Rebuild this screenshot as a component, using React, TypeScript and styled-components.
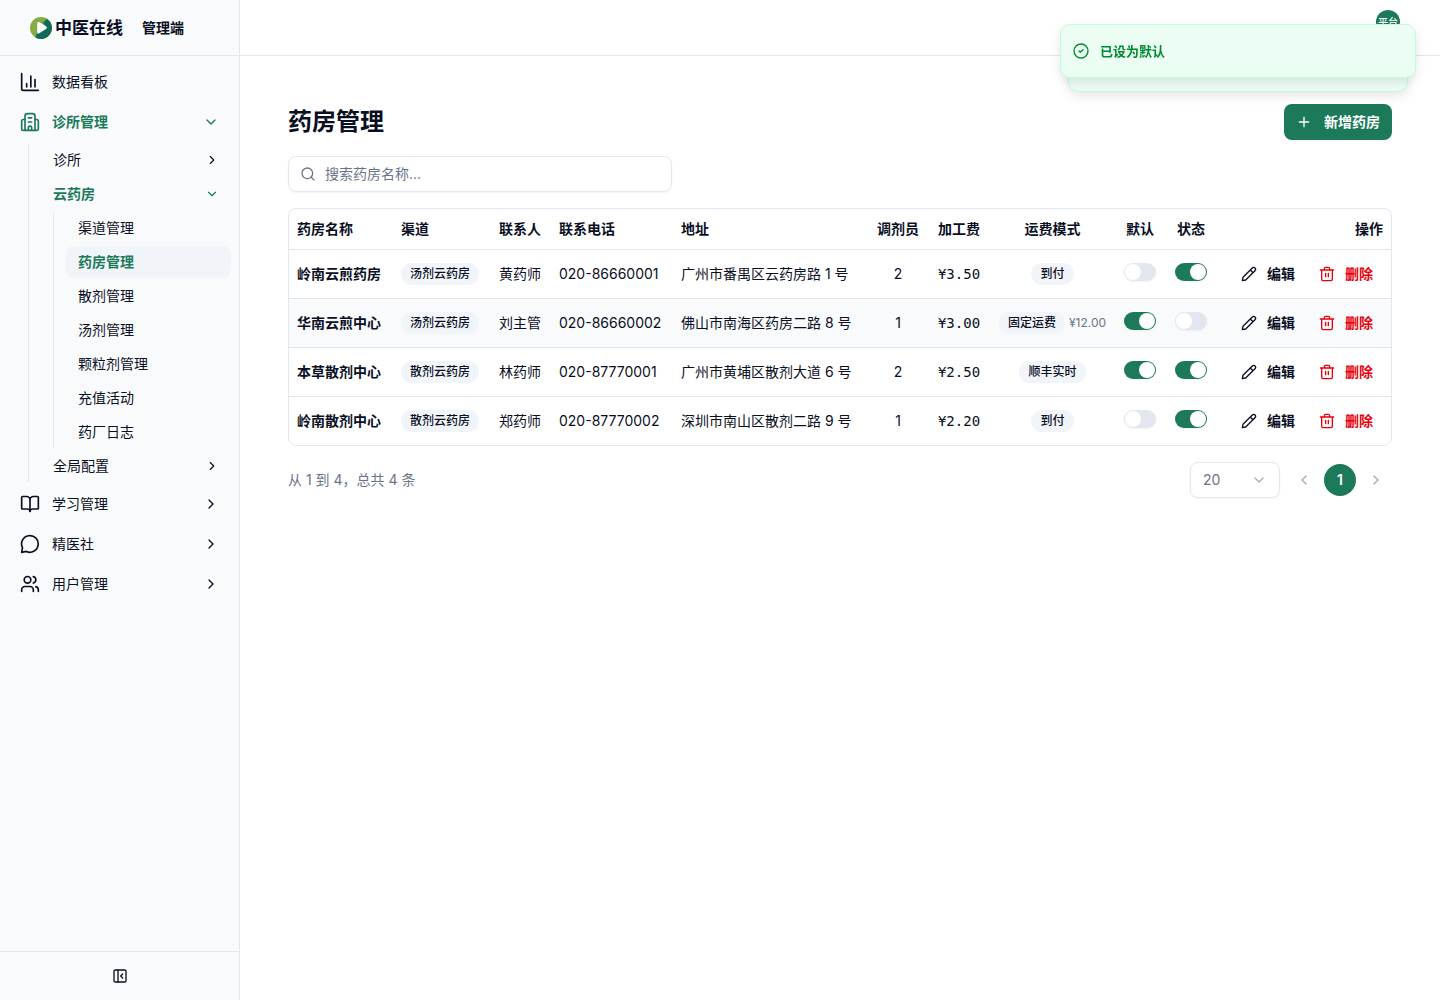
import React, { useState } from 'react';
import styled, { createGlobalStyle, css } from 'styled-components';
import {
  BookOpen,
  ChevronDown,
  ChevronLeft,
  ChevronRight,
  Plus,
  Search,
  Users,
} from 'lucide-react';

const color = {
  text: '#0a0f24',
  muted: '#6b7488',
  border: '#e2e6ef',
  panel: '#f8fafc',
  soft: '#f1f4f9',
  primary: '#1c7a5a',
  danger: '#e7000b',
};

const GlobalStyle = createGlobalStyle`
  *, *::before, *::after { box-sizing: border-box; }
  body {
    margin: 0;
    background: #fff;
    color: ${color.text};
    font: 400 14px/20px Inter, "Noto Sans CJK SC", sans-serif;
  }
  button, input, select { font: inherit; color: inherit; }
  button { cursor: pointer; border: 0; padding: 0; background: none; }
  ul { list-style: none; margin: 0; padding: 0; }
  svg { flex: none; display: block; }
`;

const Shell = styled.div`
  display: grid;
  grid-template-columns: 240px minmax(0, 1fr);
  min-height: 100vh;
`;

const Sidebar = styled.aside`
  position: sticky;
  top: 0;
  height: 100vh;
  display: flex;
  flex-direction: column;
  background: ${color.panel};
  border-right: 1px solid ${color.border};
`;

const Brand = styled.div`
  height: 56px;
  display: flex;
  align-items: center;
  gap: 19px;
  padding: 0 30px;
  border-bottom: 1px solid ${color.border};
  font-weight: 600;
`;

const Logo = styled.div`
  display: flex;
  align-items: center;
  gap: 3px;
  font-size: 17px;
  font-weight: 600;
`;

const Nav = styled.nav`
  flex: 1;
  min-height: 0;
  overflow-y: auto;
  padding: 8px;
`;

const Level = styled.ul<{ $depth: number }>`
  display: flex;
  flex-direction: column;
  gap: ${(p) => (p.$depth === 0 ? 4 : 2)}px;
  ${(p) =>
    p.$depth > 0 &&
    css`
      margin-top: ${p.$depth === 1 ? 4 : 2}px;
      margin-left: ${p.$depth === 1 ? 20 : 12}px;
      padding-left: 12px;
      border-left: 1px solid ${color.border};
    `}
`;

const navItem = css<{ $depth: number; $open?: boolean }>`
  width: 100%;
  height: ${(p) => (p.$depth === 0 ? 36 : 32)}px;
  display: flex;
  align-items: center;
  gap: 12px;
  padding: 0 12px;
  border-radius: 8px;
  text-align: left;
  text-decoration: none;
  color: ${(p) => (p.$open ? color.primary : color.text)};
  font-weight: ${(p) => (p.$open ? 600 : 400)};
`;

const NavButton = styled.button<{ $depth: number; $open?: boolean }>`
  ${navItem}
`;

const NavLink = styled.a<{ $depth: number; $open?: boolean }>`
  ${navItem}
  &[aria-current='page'] {
    background: ${color.soft};
  }
`;

const NavText = styled.span`
  flex: 1;
`;

const SidebarFoot = styled.div`
  height: 49px;
  display: flex;
  align-items: center;
  justify-content: center;
  border-top: 1px solid ${color.border};
`;

const Topbar = styled.header`
  height: 56px;
  display: flex;
  justify-content: flex-end;
  padding: 10px 40px;
  border-bottom: 1px solid ${color.border};
`;

const Avatar = styled.button`
  width: 24px;
  height: 24px;
  border-radius: 50%;
  background: ${color.primary};
  color: #fff;
  font-size: 10px;
  font-weight: 500;
  line-height: 24px;
`;

const Main = styled.main`
  display: flex;
  flex-direction: column;
  gap: 16px;
  padding: 48px;
`;

const PageHead = styled.div`
  display: flex;
  align-items: center;
  justify-content: space-between;
`;

const Title = styled.h1`
  margin: 0;
  font-size: 24px;
  line-height: 32px;
  font-weight: 700;
`;

const PrimaryButton = styled.button`
  height: 36px;
  display: flex;
  align-items: center;
  gap: 12px;
  padding: 0 12px;
  border-radius: 8px;
  background: ${color.primary};
  color: #fff;
  font-weight: 600;
`;

const field = css`
  height: 36px;
  display: flex;
  align-items: center;
  border: 1px solid ${color.border};
  border-radius: 8px;
  box-shadow: 0 1px 2px rgba(0, 0, 0, 0.05);
  color: ${color.muted};
`;

const SearchBox = styled.label`
  ${field}
  width: 100%;
  max-width: 384px;
  gap: 9px;
  padding: 0 11px;

  input {
    flex: 1;
    min-width: 0;
    padding: 0;
    border: 0;
    outline: 0;
    background: none;
    color: ${color.text};
  }
  input::placeholder {
    color: ${color.muted};
    opacity: 1;
  }
`;

const TableFrame = styled.div`
  overflow-x: auto;
  border: 1px solid ${color.border};
  border-radius: 8px;
`;

const Table = styled.table`
  width: 100%;
  min-width: 1080px;
  table-layout: fixed;
  border-collapse: separate;
  border-spacing: 0;

  tbody tr:last-child td {
    height: 48px;
    border-bottom: 0;
  }
  tbody tr[aria-selected='true'] {
    background: ${color.panel};
  }
`;

type Align = 'left' | 'center' | 'right';

const Th = styled.th<{ $align?: Align }>`
  height: 41px;
  padding: 0 8px;
  border-bottom: 1px solid ${color.border};
  text-align: ${(p) => p.$align ?? 'left'};
  font-weight: 600;
  white-space: nowrap;
`;

const Td = styled.td<{ $align?: Align; $strong?: boolean }>`
  height: 49px;
  padding: 0 8px;
  border-bottom: 1px solid ${color.border};
  text-align: ${(p) => p.$align ?? 'left'};
  font-weight: ${(p) => (p.$strong ? 600 : 400)};
  white-space: nowrap;
`;

const Fee = styled.span`
  font-family: 'DejaVu Sans Mono', monospace;
`;

const Shipping = styled.div`
  display: flex;
  align-items: center;
  justify-content: center;
  gap: 4px;
  color: ${color.muted};
  font-size: 12px;
`;

const Badge = styled.span`
  display: inline-block;
  padding: 1px 9px;
  border-radius: 11px;
  background: ${color.soft};
  color: ${color.text};
  font-size: 12px;
  font-weight: 500;
`;

const Switch = styled.input`
  appearance: none;
  width: 32px;
  height: 18px;
  margin: 0;
  padding: 1px;
  border-radius: 9px;
  background: ${color.border};
  box-shadow: 0 1px 2px rgba(0, 0, 0, 0.05);
  cursor: pointer;

  &::before {
    content: '';
    display: block;
    width: 16px;
    height: 16px;
    border-radius: 50%;
    background: #fff;
  }
  &:checked {
    background: ${color.primary};
  }
  &:checked::before {
    margin-left: 14px;
  }
`;

const Actions = styled.div`
  display: flex;
  justify-content: flex-end;
  gap: 4px;
`;

const ActionButton = styled.button<{ $danger?: boolean }>`
  height: 32px;
  display: flex;
  align-items: center;
  gap: 10px;
  padding: 0 10px;
  border-radius: 8px;
  font-weight: 600;
  color: ${(p) => (p.$danger ? color.danger : color.text)};
`;

const Footer = styled.div`
  display: flex;
  align-items: center;
  justify-content: space-between;
  color: ${color.muted};
`;

const Pager = styled.div`
  display: flex;
  align-items: center;
  gap: 8px;
`;

const SizeSelect = styled.label`
  ${field}
  width: 90px;
  padding-right: 12px;

  select {
    flex: 1;
    height: 34px;
    margin-right: -16px;
    padding: 0 12px;
    border: 0;
    outline: 0;
    appearance: none;
    background: none;
  }
  svg {
    opacity: 0.6;
    pointer-events: none;
  }
`;

const Pages = styled.div`
  display: flex;
  gap: 4px;
`;

const PageButton = styled.button`
  width: 32px;
  height: 32px;
  display: flex;
  align-items: center;
  justify-content: center;
  border-radius: 50%;
  font-weight: 600;

  &:disabled {
    opacity: 0.6;
    cursor: default;
  }
  &[aria-current='page'] {
    background: ${color.primary};
    color: #fff;
  }
`;

const toastSurface = css`
  border: 1px solid #bffcd9;
  border-radius: 10px;
  background: #ecfdf3;
  box-shadow: 0 4px 12px rgba(0, 0, 0, 0.1);
`;

const ToastStack = styled.div`
  position: fixed;
  top: 24px;
  right: 24px;
  width: 356px;
`;

const Toast = styled.div`
  ${toastSurface}
  position: relative;
  height: 54px;
  display: flex;
  align-items: center;
  gap: 11px;
  padding: 0 12px;
  color: #008a2e;
  font-size: 13px;
  font-weight: 600;
`;

const ToastBehind = styled.div`
  ${toastSurface}
  position: absolute;
  inset: 16px 8px -14px;
`;

const LogoMark = () => (
  <svg width="22" height="22" viewBox="0 0 22 22" aria-hidden="true">
    <circle cx="11" cy="11" r="11" fill="#86ad45" />
    <path d="M17 1.8A11 11 0 0 1 5.6 20.6L6.6 16.5 16 11 13 5.5Z" fill="#126b58" />
    <path d="M7.2 6.2C7.2 5 8.3 4.7 9.3 5.2L16 9.3C17.2 10 17.2 11.4 16 12.1L8.8 16.6C7.8 17.1 7.2 16.6 7.2 15.6Z" fill="#fff" />
  </svg>
);

type StrokeProps = { size?: number; children: React.ReactNode };

const Stroke = ({ size = 20, children }: StrokeProps) => (
  <svg
    width={size}
    height={size}
    viewBox="0 0 24 24"
    fill="none"
    stroke="currentColor"
    strokeWidth="2"
    strokeLinecap="round"
    strokeLinejoin="round"
    aria-hidden="true"
  >
    {children}
  </svg>
);

const ChartIcon = () => (
  <Stroke>
    <path d="M2 2v18a2 2 0 0 0 2 2h18M8 18v-4M13 18V5M18 18V9" />
  </Stroke>
);

const BuildingIcon = () => (
  <Stroke>
    <path d="M10 22v-3a2 2 0 0 1 4 0v3M10 7h4M10 12h4" />
    <path d="M6 9H4a2 2 0 0 0-2 2v9a2 2 0 0 0 2 2h16a2 2 0 0 0 2-2v-9a2 2 0 0 0-2-2h-2" />
    <path d="M6 22V5a3 3 0 0 1 3-3h6a3 3 0 0 1 3 3v17" />
  </Stroke>
);

const BubbleIcon = () => (
  <Stroke>
    <path d="M3 16.5A10 10 0 1 1 7.5 20.9L2 22Z" />
  </Stroke>
);

const PencilIcon = () => (
  <Stroke size={16}>
    <path d="M3 17 17 3a2.8 2.8 0 0 1 4 4L7 21l-5 1ZM14 6l4 4" />
  </Stroke>
);

const TrashIcon = () => (
  <Stroke size={16}>
    <path d="M2 6h20M4 6v14a2 2 0 0 0 2 2h12a2 2 0 0 0 2-2V6M8 6V4a2 2 0 0 1 2-2h4a2 2 0 0 1 2 2v2M10 11v5M14 11v5" />
  </Stroke>
);

const CollapseIcon = () => (
  <Stroke size={16}>
    <rect x="3" y="3" width="18" height="18" rx="2" />
    <path d="M9 3v18M16 9l-3 3 3 3" />
  </Stroke>
);

const ToastIcon = () => (
  <Stroke size={16}>
    <circle cx="12" cy="12" r="10.5" />
    <path d="m9 12 2 2 4-4" />
  </Stroke>
);

type Item = { label: string; icon?: React.ReactNode; children?: Item[]; open?: boolean; current?: boolean; leaf?: boolean };

const menu: Item[] = [
  { label: '数据看板', icon: <ChartIcon />, leaf: true },
  {
    label: '诊所管理',
    icon: <BuildingIcon />,
    open: true,
    children: [
      { label: '诊所' },
      {
        label: '云药房',
        open: true,
        children: [
          { label: '渠道管理', leaf: true },
          { label: '药房管理', leaf: true, current: true },
          { label: '散剂管理', leaf: true },
          { label: '汤剂管理', leaf: true },
          { label: '颗粒剂管理', leaf: true },
          { label: '充值活动', leaf: true },
          { label: '药厂日志', leaf: true },
        ],
      },
      { label: '全局配置' },
    ],
  },
  { label: '学习管理', icon: <BookOpen size={20} /> },
  { label: '精医社', icon: <BubbleIcon /> },
  { label: '用户管理', icon: <Users size={20} /> },
];

const MenuItem = ({ item, depth }: { item: Item; depth: number }) => {
  const [open, setOpen] = useState(!!item.open);
  const chevron = depth === 0 ? 16 : 14;
  if (item.leaf) {
    return (
      <li>
        <NavLink href="#" $depth={depth} $open={item.current} aria-current={item.current ? 'page' : undefined}>
          {item.icon}
          <NavText>{item.label}</NavText>
        </NavLink>
      </li>
    );
  }
  return (
    <li>
      <NavButton type="button" $depth={depth} $open={open} aria-expanded={open} onClick={() => setOpen(!open)}>
        {item.icon}
        <NavText>{item.label}</NavText>
        {open ? <ChevronDown size={chevron} /> : <ChevronRight size={chevron} />}
      </NavButton>
      {open && item.children && <Menu items={item.children} depth={depth + 1} />}
    </li>
  );
};

const Menu = ({ items, depth }: { items: Item[]; depth: number }) => (
  <Level $depth={depth}>
    {items.map((item) => (
      <MenuItem key={item.label} item={item} depth={depth} />
    ))}
  </Level>
);

const columns: { label: string; width: number; align?: Align }[] = [
  { label: '药房名称', width: 104 },
  { label: '渠道', width: 98 },
  { label: '联系人', width: 60 },
  { label: '联系电话', width: 122 },
  { label: '地址', width: 196 },
  { label: '调剂员', width: 58, align: 'center' },
  { label: '加工费', width: 64, align: 'center' },
  { label: '运费模式', width: 123, align: 'center' },
  { label: '默认', width: 52, align: 'center' },
  { label: '状态', width: 50, align: 'center' },
  { label: '操作', width: 175, align: 'right' },
];

const pharmacies = [
  { name: '岭南云煎药房', channel: '汤剂云药房', contact: '黄药师', phone: '020-86660001', address: '广州市番禺区云药房路 1 号', staff: 2, fee: '¥3.50', shipping: '到付', isDefault: false, enabled: true },
  { name: '华南云煎中心', channel: '汤剂云药房', contact: '刘主管', phone: '020-86660002', address: '佛山市南海区药房二路 8 号', staff: 1, fee: '¥3.00', shipping: '固定运费', price: '¥12.00', isDefault: true, enabled: false, active: true },
  { name: '本草散剂中心', channel: '散剂云药房', contact: '林药师', phone: '020-87770001', address: '广州市黄埔区散剂大道 6 号', staff: 2, fee: '¥2.50', shipping: '顺丰实时', isDefault: true, enabled: true },
  { name: '岭南散剂中心', channel: '散剂云药房', contact: '郑药师', phone: '020-87770002', address: '深圳市南山区散剂二路 9 号', staff: 1, fee: '¥2.20', shipping: '到付', isDefault: false, enabled: true },
];

export default function App() {
  return (
    <>
      <GlobalStyle />
      <Shell>
        <Sidebar>
          <Brand>
            <Logo>
              <LogoMark />
              <span>中医在线</span>
            </Logo>
            <span>管理端</span>
          </Brand>
          <Nav>
            <Menu items={menu} depth={0} />
          </Nav>
          <SidebarFoot>
            <button type="button" aria-label="收起侧栏">
              <CollapseIcon />
            </button>
          </SidebarFoot>
        </Sidebar>

        <div>
          <Topbar>
            <Avatar type="button">平台</Avatar>
          </Topbar>
          <Main>
            <PageHead>
              <Title>药房管理</Title>
              <PrimaryButton type="button">
                <Plus size={16} />
                新增药房
              </PrimaryButton>
            </PageHead>

            <SearchBox>
              <Search size={16} />
              <input type="text" placeholder="搜索药房名称..." aria-label="搜索药房名称" />
            </SearchBox>

            <TableFrame>
              <Table>
                <colgroup>
                  {columns.map((c) => (
                    <col key={c.label} width={c.width} />
                  ))}
                </colgroup>
                <thead>
                  <tr>
                    {columns.map((c) => (
                      <Th key={c.label} $align={c.align}>
                        {c.label}
                      </Th>
                    ))}
                  </tr>
                </thead>
                <tbody>
                  {pharmacies.map((p) => (
                    <tr key={p.name} aria-selected={!!p.active}>
                      <Td $strong>{p.name}</Td>
                      <Td>
                        <Badge>{p.channel}</Badge>
                      </Td>
                      <Td>{p.contact}</Td>
                      <Td>{p.phone}</Td>
                      <Td>{p.address}</Td>
                      <Td $align="center">{p.staff}</Td>
                      <Td $align="center">
                        <Fee>{p.fee}</Fee>
                      </Td>
                      <Td $align="center">
                        <Shipping>
                          <Badge>{p.shipping}</Badge>
                          {p.price}
                        </Shipping>
                      </Td>
                      <Td $align="center">
                        <Switch type="checkbox" role="switch" defaultChecked={p.isDefault} aria-label={`${p.name} 默认`} />
                      </Td>
                      <Td $align="center">
                        <Switch type="checkbox" role="switch" defaultChecked={p.enabled} aria-label={`${p.name} 状态`} />
                      </Td>
                      <Td $align="right">
                        <Actions>
                          <ActionButton type="button">
                            <PencilIcon />
                            编辑
                          </ActionButton>
                          <ActionButton type="button" $danger>
                            <TrashIcon />
                            删除
                          </ActionButton>
                        </Actions>
                      </Td>
                    </tr>
                  ))}
                </tbody>
              </Table>
            </TableFrame>

            <Footer>
              <span>从 1 到 4，总共 4 条</span>
              <Pager>
                <SizeSelect>
                  <select defaultValue="20" aria-label="每页条数">
                    <option>10</option>
                    <option>20</option>
                    <option>50</option>
                  </select>
                  <ChevronDown size={16} />
                </SizeSelect>
                <Pages>
                  <PageButton type="button" disabled aria-label="上一页">
                    <ChevronLeft size={16} />
                  </PageButton>
                  <PageButton type="button" aria-current="page">
                    1
                  </PageButton>
                  <PageButton type="button" disabled aria-label="下一页">
                    <ChevronRight size={16} />
                  </PageButton>
                </Pages>
              </Pager>
            </Footer>
          </Main>
        </div>
      </Shell>

      <ToastStack role="status">
        <ToastBehind />
        <Toast>
          <ToastIcon />
          已设为默认
        </Toast>
      </ToastStack>
    </>
  );
}
